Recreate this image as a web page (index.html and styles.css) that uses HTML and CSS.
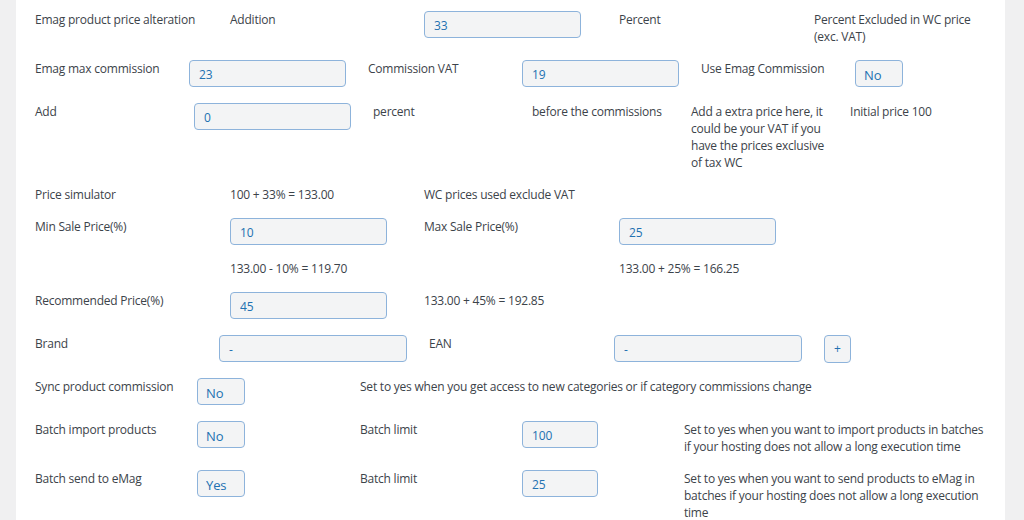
FILE: index.html
```html
<!DOCTYPE html>
<html lang="en">
<head>
<meta charset="utf-8">
<title>Emag settings</title>
<link rel="stylesheet" href="styles.css">
</head>
<body>
<div class="panel">
  <div class="row r-a">
    <div class="cell">Emag product price alteration</div>
    <div class="cell">Addition</div>
    <div class="cell"><input class="field" type="text" value="33"></div>
    <div class="cell">Percent</div>
    <div class="cell">Percent Excluded in WC price (exc. VAT)</div>
  </div>
  <div class="row r-b">
    <div class="cell">Emag max commission</div>
    <div class="cell"><input class="field" type="text" value="23"></div>
    <div class="cell">Commission VAT</div>
    <div class="cell"><input class="field" type="text" value="19"></div>
    <div class="cell">Use Emag Commission</div>
    <div class="cell"><select class="choice"><option>No</option><option>Yes</option></select></div>
  </div>
  <div class="row r-c">
    <div class="cell">Add</div>
    <div class="cell"><input class="field" type="text" value="0"></div>
    <div class="cell">percent</div>
    <div class="cell">before the commissions</div>
    <div class="cell narrow">Add a extra price here, it could be your VAT if you have the prices exclusive of tax WC</div>
    <div class="cell">Initial price 100</div>
  </div>
  <div class="row r-d">
    <div class="cell">Price simulator</div>
    <div class="cell">100 + 33% = 133.00</div>
    <div class="cell span">WC prices used exclude VAT</div>
  </div>
  <div class="row r-d">
    <div class="cell">Min Sale Price(%)</div>
    <div class="cell"><input class="field" type="text" value="10"></div>
    <div class="cell">Max Sale Price(%)</div>
    <div class="cell"><input class="field" type="text" value="25"></div>
  </div>
  <div class="row r-d calc">
    <div class="cell"></div>
    <div class="cell">133.00 - 10% = 119.70</div>
    <div class="cell"></div>
    <div class="cell">133.00 + 25% = 166.25</div>
  </div>
  <div class="row r-d">
    <div class="cell">Recommended Price(%)</div>
    <div class="cell"><input class="field" type="text" value="45"></div>
    <div class="cell span">133.00 + 45% = 192.85</div>
  </div>
  <div class="row r-e">
    <div class="cell">Brand</div>
    <div class="cell"><input class="field wide" type="text" value="-"></div>
    <div class="cell">EAN</div>
    <div class="cell"><input class="field wide" type="text" value="-"></div>
    <div class="cell"><button class="plus" type="button">+</button></div>
  </div>
  <div class="row r-f">
    <div class="cell">Sync product commission</div>
    <div class="cell"><select class="choice"><option>No</option><option>Yes</option></select></div>
    <div class="cell span">Set to yes when you get access to new categories or if category commissions change</div>
  </div>
  <div class="row r-f">
    <div class="cell">Batch import products</div>
    <div class="cell"><select class="choice"><option>No</option><option>Yes</option></select></div>
    <div class="cell">Batch limit</div>
    <div class="cell"><input class="field short" type="text" value="100"></div>
    <div class="cell desc">Set to yes when you want to import products in batches if your hosting does not allow a long execution time</div>
  </div>
  <div class="row r-f">
    <div class="cell">Batch send to eMag</div>
    <div class="cell"><select class="choice"><option>Yes</option><option>No</option></select></div>
    <div class="cell">Batch limit</div>
    <div class="cell"><input class="field short" type="text" value="25"></div>
    <div class="cell desc">Set to yes when you want to send products to eMag in batches if your hosting does not allow a long execution time</div>
  </div>
</div>
</body>
</html>
```

FILE: styles.css
```css
html, body {
  margin: 0;
  padding: 0;
}
body {
  background: #f0f0f1;
  font-family: "Open Sans", "Noto Sans", sans-serif;
  font-size: 12px;
  line-height: 17px;
  letter-spacing: -0.22px;
  color: #3c434a;
  height: 520px;
  overflow: hidden;
}
.panel {
  margin-left: 16px;
  width: 989px;
  min-height: 560px;
  background: #ffffff;
  box-sizing: border-box;
  padding: 11px 0 0 19px;
  display: flex;
  flex-direction: column;
  gap: 15px;
}
.row {
  display: grid;
  align-items: start;
}
.row.calc {
  line-height: 16px;
}
.cell {
  min-width: 0;
}
.span {
  grid-column: 3 / -1;
}
.r-a { grid-template-columns: 195px 194px 195px 195px 165px; }
.r-b { grid-template-columns: 154px 179px 154px 179px 154px auto; }
.r-c { grid-template-columns: 159px 179px 159px 159px 159px auto; }
.r-d { grid-template-columns: 195px 194px 195px auto; }
.r-e { grid-template-columns: 184px 210px 185px 210px auto; }
.r-f { grid-template-columns: 162px 163px 162px 162px 305px; }
.narrow { max-width: 140px; }

.field, .choice, .plus {
  display: block;
  box-sizing: border-box;
  height: 27px;
  margin: 0 0 1px;
  border: 1px solid #8db3db;
  border-radius: 4px;
  background: #f3f4f5;
  color: #2271b1;
  font-family: inherit;
  font-size: 12px;
  letter-spacing: -0.1px;
  outline: none;
}
.field {
  width: 157px;
  padding: 2px 8px 0 9px;
}
.field.wide { width: 188px; }
.field.short { width: 76px; }
.choice {
  appearance: none;
  -webkit-appearance: none;
  width: 48px;
  padding: 2px 0 0 8px;
  font-size: 13px;
}
.plus {
  width: 27px;
  height: 28px;
  margin: 0;
  padding: 0;
  text-align: center;
  font-size: 12px;
  line-height: 1;
  cursor: pointer;
}
```
